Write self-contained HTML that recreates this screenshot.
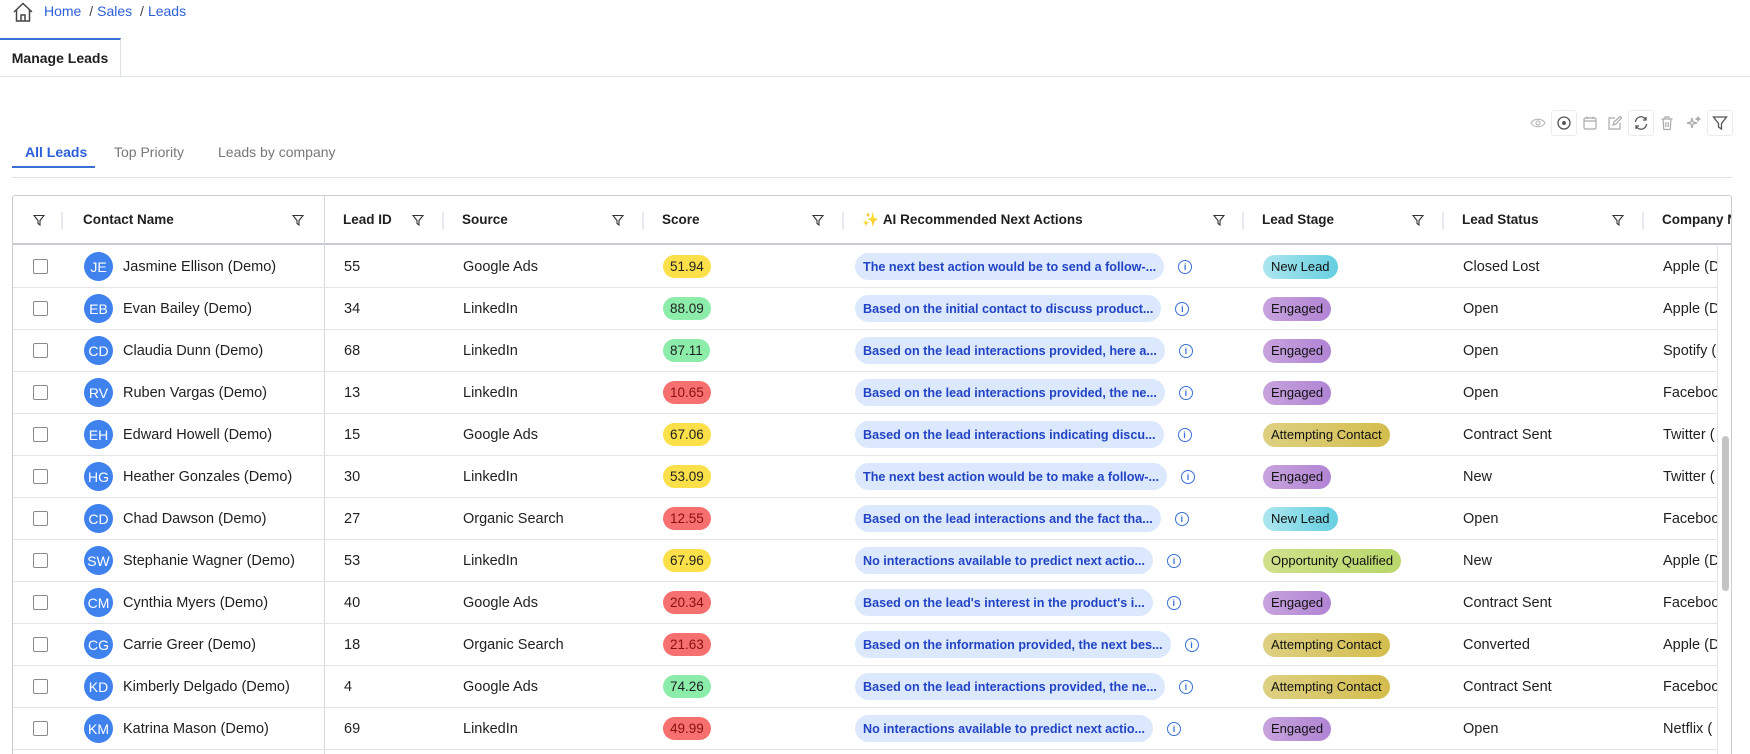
<!DOCTYPE html>
<html><head><meta charset="utf-8"><style>
*{box-sizing:border-box;margin:0;padding:0}
body{width:1750px;height:754px;overflow:hidden;background:#fff;font-family:"Liberation Sans",Arial,sans-serif;color:#1f1f1f;position:relative}
.abs{position:absolute}
.bc{top:3px;left:44px;font-size:14px;color:#2b5fd9}
.bc span{color:#444;margin:0 4px}
.tab{left:0;top:38px;width:121px;height:39px;border-top:2px solid #3b6fd6;border-right:1px solid #dde1e8;font-weight:bold;font-size:14px;text-align:center;line-height:36px}
.hl{left:0;top:76px;width:1750px;height:1px;background:#dde1e8}
.ic{top:112px;width:22px;height:22px;display:flex;align-items:center;justify-content:center}
.ic.b{border:1px solid #ececec;border-radius:3px;width:26px;height:26px;top:110px}
.st{top:144px;font-size:14px;color:#777}
.table{left:12px;top:195px;width:1720px;height:559px;border:1.5px solid #c9ccd3;border-bottom:none;border-radius:3px 3px 0 0;overflow:hidden}
.hdr{position:absolute;left:0;top:0;width:1720px;height:49px;border-bottom:2px solid #c9ccd3;font-weight:bold;font-size:13.5px}
.row{position:absolute;left:0;width:1704px;height:42px;border-bottom:1px solid #e2e4e8;font-size:14.5px;overflow:hidden}
.c{position:absolute;top:0;height:100%;display:flex;align-items:center;white-space:nowrap}
.sep{position:absolute;top:16px;width:2px;height:17px;background:#e6e9ef}
.cb{width:15px;height:15px;border:1.5px solid #8a8a8a;border-radius:2px}
.av{width:29px;height:29px;border-radius:50%;background:#3f82ee;color:#fff;font-size:14px;display:flex;align-items:center;justify-content:center;margin-right:10px}
.sc{padding:0 7px;height:23px;border-radius:12px;display:flex;align-items:center;font-size:13.5px;min-width:46px;justify-content:center}
.y{background:#fbe04a}.g{background:#8cecaa}.r{background:#f6706f;color:#8a1010}
.ai{background:#dbe8fd;color:#2244c4;font-weight:bold;font-size:12.6px;height:27px;border-radius:14px;padding:0 8px;display:flex;align-items:center;white-space:nowrap}
.inf{width:14px;height:14px;border:1.3px solid #3b6fd6;border-radius:50%;margin-left:14px;color:#3b6fd6;font-size:9px;display:flex;align-items:center;justify-content:center;font-weight:bold}
.stg{height:24px;border-radius:12px;padding:0 8px;display:flex;align-items:center;font-size:13px;color:#111}
.nl{background:linear-gradient(90deg,#ace6ef,#66cfe0)}
.en{background:linear-gradient(90deg,#c7a3dd,#b184d4)}
.at{background:linear-gradient(90deg,#ddd082,#d4bd4e)}
.oq{background:linear-gradient(90deg,#cfe08b,#b9d86c)}
.vd{position:absolute;left:311px;top:0;width:1px;height:600px;background:#d5d8de}
</style></head><body>
<svg class="abs" style="left:12px;top:1px" width="22" height="22" viewBox="0 0 22 22" fill="none" stroke="#444" stroke-width="1.5"><path d="M2 11 L11 2.5 L20 11"/><path d="M4.5 9 V20 H17.5 V9"/><path d="M9 20 V14 H13 V20"/></svg>
<div class="abs bc">Home <span>/</span>Sales <span>/</span>Leads</div>
<div class="abs tab">Manage Leads</div>
<div class="abs hl"></div>

<div class="abs ic" style="left:1527px"><svg width="16" height="16" viewBox="0 0 16 16" fill="none" stroke="#bbb" stroke-width="1.2"><path d="M1 8 C4 3 12 3 15 8 C12 13 4 13 1 8Z"/><circle cx="8" cy="8" r="2"/></svg></div>
<div class="abs ic b" style="left:1551px"><svg width="16" height="16" viewBox="0 0 16 16" fill="none" stroke="#555" stroke-width="1.3"><circle cx="8" cy="8" r="6"/><circle cx="8" cy="8" r="1.3" fill="#555"/></svg></div>
<div class="abs ic" style="left:1579px"><svg width="16" height="16" viewBox="0 0 16 16" fill="none" stroke="#aaa" stroke-width="1.2"><rect x="2" y="3" width="12" height="11" rx="1.5"/><path d="M2 6 H14 M5 1.5 V4 M11 1.5 V4"/></svg></div>
<div class="abs ic" style="left:1604px"><svg width="16" height="16" viewBox="0 0 16 16" fill="none" stroke="#aaa" stroke-width="1.2"><path d="M13 8 V14 H2 V3 H8"/><path d="M6 10 L7 7 L13 1.5 L14.5 3 L9 9Z"/></svg></div>
<div class="abs ic b" style="left:1628px"><svg width="16" height="16" viewBox="0 0 16 16" fill="none" stroke="#555" stroke-width="1.3"><path d="M2.5 7 A5.5 5.5 0 0 1 13 5 M13 2 V5 H10"/><path d="M13.5 9 A5.5 5.5 0 0 1 3 11 M3 14 V11 H6"/></svg></div>
<div class="abs ic" style="left:1656px"><svg width="16" height="16" viewBox="0 0 16 16" fill="none" stroke="#aaa" stroke-width="1.2"><path d="M2.5 4 H13.5 M6 4 V2 H10 V4 M4 4 L4.8 14.5 H11.2 L12 4 M6.8 7 V12 M9.2 7 V12"/></svg></div>
<div class="abs ic" style="left:1683px"><svg width="16" height="16" viewBox="0 0 16 16" fill="none" stroke="#aaa" stroke-width="1.2"><path d="M6 3 L7 7 L11 8 L7 9 L6 13 L5 9 L1 8 L5 7Z"/><path d="M12 1.5 L12.5 3.5 L14.5 4 L12.5 4.5 L12 6.5 L11.5 4.5 L9.5 4 L11.5 3.5Z"/></svg></div>
<div class="abs ic b" style="left:1707px"><svg width="16" height="16" viewBox="0 0 16 16" fill="none" stroke="#555" stroke-width="1.3"><path d="M1.5 2 H14.5 L9.5 8.5 V14 L6.5 12 V8.5Z"/></svg></div>

<div class="abs st" style="left:25px;color:#2b5fd9;font-weight:bold">All Leads</div>
<div class="abs" style="left:12px;top:166px;width:83px;height:2px;background:#3b6fd6"></div>
<div class="abs st" style="left:114px">Top Priority</div>
<div class="abs st" style="left:218px">Leads by company</div>
<div class="abs" style="left:12px;top:177px;width:1720px;height:1px;background:#dde1e8"></div>

<div class="abs table">
<div class="vd"></div>
<div class="hdr">
<div class="c" style="left:20px"><svg width="12" height="12" viewBox="0 0 12 12" fill="none" stroke="#333" stroke-width="1.1"><path d="M1 1.5 H11 L7 6.5 V11 L5 9.5 V6.5Z"/></svg></div>
<div class="sep" style="left:48px"></div>
<div class="c" style="left:70px">Contact Name</div>
<div class="c" style="left:279px"><svg width="12" height="12" viewBox="0 0 12 12" fill="none" stroke="#333" stroke-width="1.1"><path d="M1 1.5 H11 L7 6.5 V11 L5 9.5 V6.5Z"/></svg></div>
<div class="c" style="left:330px">Lead ID</div>
<div class="c" style="left:399px"><svg width="12" height="12" viewBox="0 0 12 12" fill="none" stroke="#333" stroke-width="1.1"><path d="M1 1.5 H11 L7 6.5 V11 L5 9.5 V6.5Z"/></svg></div>
<div class="sep" style="left:429px"></div>
<div class="c" style="left:449px">Source</div>
<div class="c" style="left:599px"><svg width="12" height="12" viewBox="0 0 12 12" fill="none" stroke="#333" stroke-width="1.1"><path d="M1 1.5 H11 L7 6.5 V11 L5 9.5 V6.5Z"/></svg></div>
<div class="sep" style="left:629px"></div>
<div class="c" style="left:649px">Score</div>
<div class="c" style="left:799px"><svg width="12" height="12" viewBox="0 0 12 12" fill="none" stroke="#333" stroke-width="1.1"><path d="M1 1.5 H11 L7 6.5 V11 L5 9.5 V6.5Z"/></svg></div>
<div class="sep" style="left:829px"></div>
<div class="c" style="left:849px"><span style="color:#e8c34a;margin-right:4px">✨</span>AI Recommended Next Actions</div>
<div class="c" style="left:1200px"><svg width="12" height="12" viewBox="0 0 12 12" fill="none" stroke="#333" stroke-width="1.1"><path d="M1 1.5 H11 L7 6.5 V11 L5 9.5 V6.5Z"/></svg></div>
<div class="sep" style="left:1229px"></div>
<div class="c" style="left:1249px">Lead Stage</div>
<div class="c" style="left:1399px"><svg width="12" height="12" viewBox="0 0 12 12" fill="none" stroke="#333" stroke-width="1.1"><path d="M1 1.5 H11 L7 6.5 V11 L5 9.5 V6.5Z"/></svg></div>
<div class="sep" style="left:1429px"></div>
<div class="c" style="left:1449px">Lead Status</div>
<div class="c" style="left:1599px"><svg width="12" height="12" viewBox="0 0 12 12" fill="none" stroke="#333" stroke-width="1.1"><path d="M1 1.5 H11 L7 6.5 V11 L5 9.5 V6.5Z"/></svg></div>
<div class="sep" style="left:1629px"></div>
<div class="c" style="left:1649px">Company N</div>
</div>

<div class="row" style="top:50px"><div class="c" style="left:20px"><div class="cb"></div></div><div class="c" style="left:71px"><div class="av">JE</div>Jasmine Ellison (Demo)</div><div class="c" style="left:331px">55</div><div class="c" style="left:450px">Google Ads</div><div class="c" style="left:650px"><div class="sc y">51.94</div></div><div class="c" style="left:842px"><div class="ai">The next best action would be to send a follow-...</div><div class="inf">i</div></div><div class="c" style="left:1250px"><div class="stg nl">New Lead</div></div><div class="c" style="left:1450px">Closed Lost</div><div class="c" style="left:1650px">Apple (D</div></div>
<div class="row" style="top:92px"><div class="c" style="left:20px"><div class="cb"></div></div><div class="c" style="left:71px"><div class="av">EB</div>Evan Bailey (Demo)</div><div class="c" style="left:331px">34</div><div class="c" style="left:450px">LinkedIn</div><div class="c" style="left:650px"><div class="sc g">88.09</div></div><div class="c" style="left:842px"><div class="ai">Based on the initial contact to discuss product...</div><div class="inf">i</div></div><div class="c" style="left:1250px"><div class="stg en">Engaged</div></div><div class="c" style="left:1450px">Open</div><div class="c" style="left:1650px">Apple (D</div></div>
<div class="row" style="top:134px"><div class="c" style="left:20px"><div class="cb"></div></div><div class="c" style="left:71px"><div class="av">CD</div>Claudia Dunn (Demo)</div><div class="c" style="left:331px">68</div><div class="c" style="left:450px">LinkedIn</div><div class="c" style="left:650px"><div class="sc g">87.11</div></div><div class="c" style="left:842px"><div class="ai">Based on the lead interactions provided, here a...</div><div class="inf">i</div></div><div class="c" style="left:1250px"><div class="stg en">Engaged</div></div><div class="c" style="left:1450px">Open</div><div class="c" style="left:1650px">Spotify (</div></div>
<div class="row" style="top:176px"><div class="c" style="left:20px"><div class="cb"></div></div><div class="c" style="left:71px"><div class="av">RV</div>Ruben Vargas (Demo)</div><div class="c" style="left:331px">13</div><div class="c" style="left:450px">LinkedIn</div><div class="c" style="left:650px"><div class="sc r">10.65</div></div><div class="c" style="left:842px"><div class="ai">Based on the lead interactions provided, the ne...</div><div class="inf">i</div></div><div class="c" style="left:1250px"><div class="stg en">Engaged</div></div><div class="c" style="left:1450px">Open</div><div class="c" style="left:1650px">Faceboo</div></div>
<div class="row" style="top:218px"><div class="c" style="left:20px"><div class="cb"></div></div><div class="c" style="left:71px"><div class="av">EH</div>Edward Howell (Demo)</div><div class="c" style="left:331px">15</div><div class="c" style="left:450px">Google Ads</div><div class="c" style="left:650px"><div class="sc y">67.06</div></div><div class="c" style="left:842px"><div class="ai">Based on the lead interactions indicating discu...</div><div class="inf">i</div></div><div class="c" style="left:1250px"><div class="stg at">Attempting Contact</div></div><div class="c" style="left:1450px">Contract Sent</div><div class="c" style="left:1650px">Twitter (</div></div>
<div class="row" style="top:260px"><div class="c" style="left:20px"><div class="cb"></div></div><div class="c" style="left:71px"><div class="av">HG</div>Heather Gonzales (Demo)</div><div class="c" style="left:331px">30</div><div class="c" style="left:450px">LinkedIn</div><div class="c" style="left:650px"><div class="sc y">53.09</div></div><div class="c" style="left:842px"><div class="ai">The next best action would be to make a follow-...</div><div class="inf">i</div></div><div class="c" style="left:1250px"><div class="stg en">Engaged</div></div><div class="c" style="left:1450px">New</div><div class="c" style="left:1650px">Twitter (</div></div>
<div class="row" style="top:302px"><div class="c" style="left:20px"><div class="cb"></div></div><div class="c" style="left:71px"><div class="av">CD</div>Chad Dawson (Demo)</div><div class="c" style="left:331px">27</div><div class="c" style="left:450px">Organic Search</div><div class="c" style="left:650px"><div class="sc r">12.55</div></div><div class="c" style="left:842px"><div class="ai">Based on the lead interactions and the fact tha...</div><div class="inf">i</div></div><div class="c" style="left:1250px"><div class="stg nl">New Lead</div></div><div class="c" style="left:1450px">Open</div><div class="c" style="left:1650px">Faceboo</div></div>
<div class="row" style="top:344px"><div class="c" style="left:20px"><div class="cb"></div></div><div class="c" style="left:71px"><div class="av">SW</div>Stephanie Wagner (Demo)</div><div class="c" style="left:331px">53</div><div class="c" style="left:450px">LinkedIn</div><div class="c" style="left:650px"><div class="sc y">67.96</div></div><div class="c" style="left:842px"><div class="ai">No interactions available to predict next actio...</div><div class="inf">i</div></div><div class="c" style="left:1250px"><div class="stg oq">Opportunity Qualified</div></div><div class="c" style="left:1450px">New</div><div class="c" style="left:1650px">Apple (D</div></div>
<div class="row" style="top:386px"><div class="c" style="left:20px"><div class="cb"></div></div><div class="c" style="left:71px"><div class="av">CM</div>Cynthia Myers (Demo)</div><div class="c" style="left:331px">40</div><div class="c" style="left:450px">Google Ads</div><div class="c" style="left:650px"><div class="sc r">20.34</div></div><div class="c" style="left:842px"><div class="ai">Based on the lead's interest in the product's i...</div><div class="inf">i</div></div><div class="c" style="left:1250px"><div class="stg en">Engaged</div></div><div class="c" style="left:1450px">Contract Sent</div><div class="c" style="left:1650px">Faceboo</div></div>
<div class="row" style="top:428px"><div class="c" style="left:20px"><div class="cb"></div></div><div class="c" style="left:71px"><div class="av">CG</div>Carrie Greer (Demo)</div><div class="c" style="left:331px">18</div><div class="c" style="left:450px">Organic Search</div><div class="c" style="left:650px"><div class="sc r">21.63</div></div><div class="c" style="left:842px"><div class="ai">Based on the information provided, the next bes...</div><div class="inf">i</div></div><div class="c" style="left:1250px"><div class="stg at">Attempting Contact</div></div><div class="c" style="left:1450px">Converted</div><div class="c" style="left:1650px">Apple (D</div></div>
<div class="row" style="top:470px"><div class="c" style="left:20px"><div class="cb"></div></div><div class="c" style="left:71px"><div class="av">KD</div>Kimberly Delgado (Demo)</div><div class="c" style="left:331px">4</div><div class="c" style="left:450px">Google Ads</div><div class="c" style="left:650px"><div class="sc g">74.26</div></div><div class="c" style="left:842px"><div class="ai">Based on the lead interactions provided, the ne...</div><div class="inf">i</div></div><div class="c" style="left:1250px"><div class="stg at">Attempting Contact</div></div><div class="c" style="left:1450px">Contract Sent</div><div class="c" style="left:1650px">Faceboo</div></div>
<div class="row" style="top:512px"><div class="c" style="left:20px"><div class="cb"></div></div><div class="c" style="left:71px"><div class="av">KM</div>Katrina Mason (Demo)</div><div class="c" style="left:331px">69</div><div class="c" style="left:450px">LinkedIn</div><div class="c" style="left:650px"><div class="sc r">49.99</div></div><div class="c" style="left:842px"><div class="ai">No interactions available to predict next actio...</div><div class="inf">i</div></div><div class="c" style="left:1250px"><div class="stg en">Engaged</div></div><div class="c" style="left:1450px">Open</div><div class="c" style="left:1650px">Netflix (</div></div>

<div style="position:absolute;left:1704px;top:50px;width:1px;height:560px;background:#e2e4e8"></div>
<div style="position:absolute;left:1709px;top:240px;width:7px;height:155px;border-radius:4px;background:#c4c4c4"></div>
</div>
</body></html>
